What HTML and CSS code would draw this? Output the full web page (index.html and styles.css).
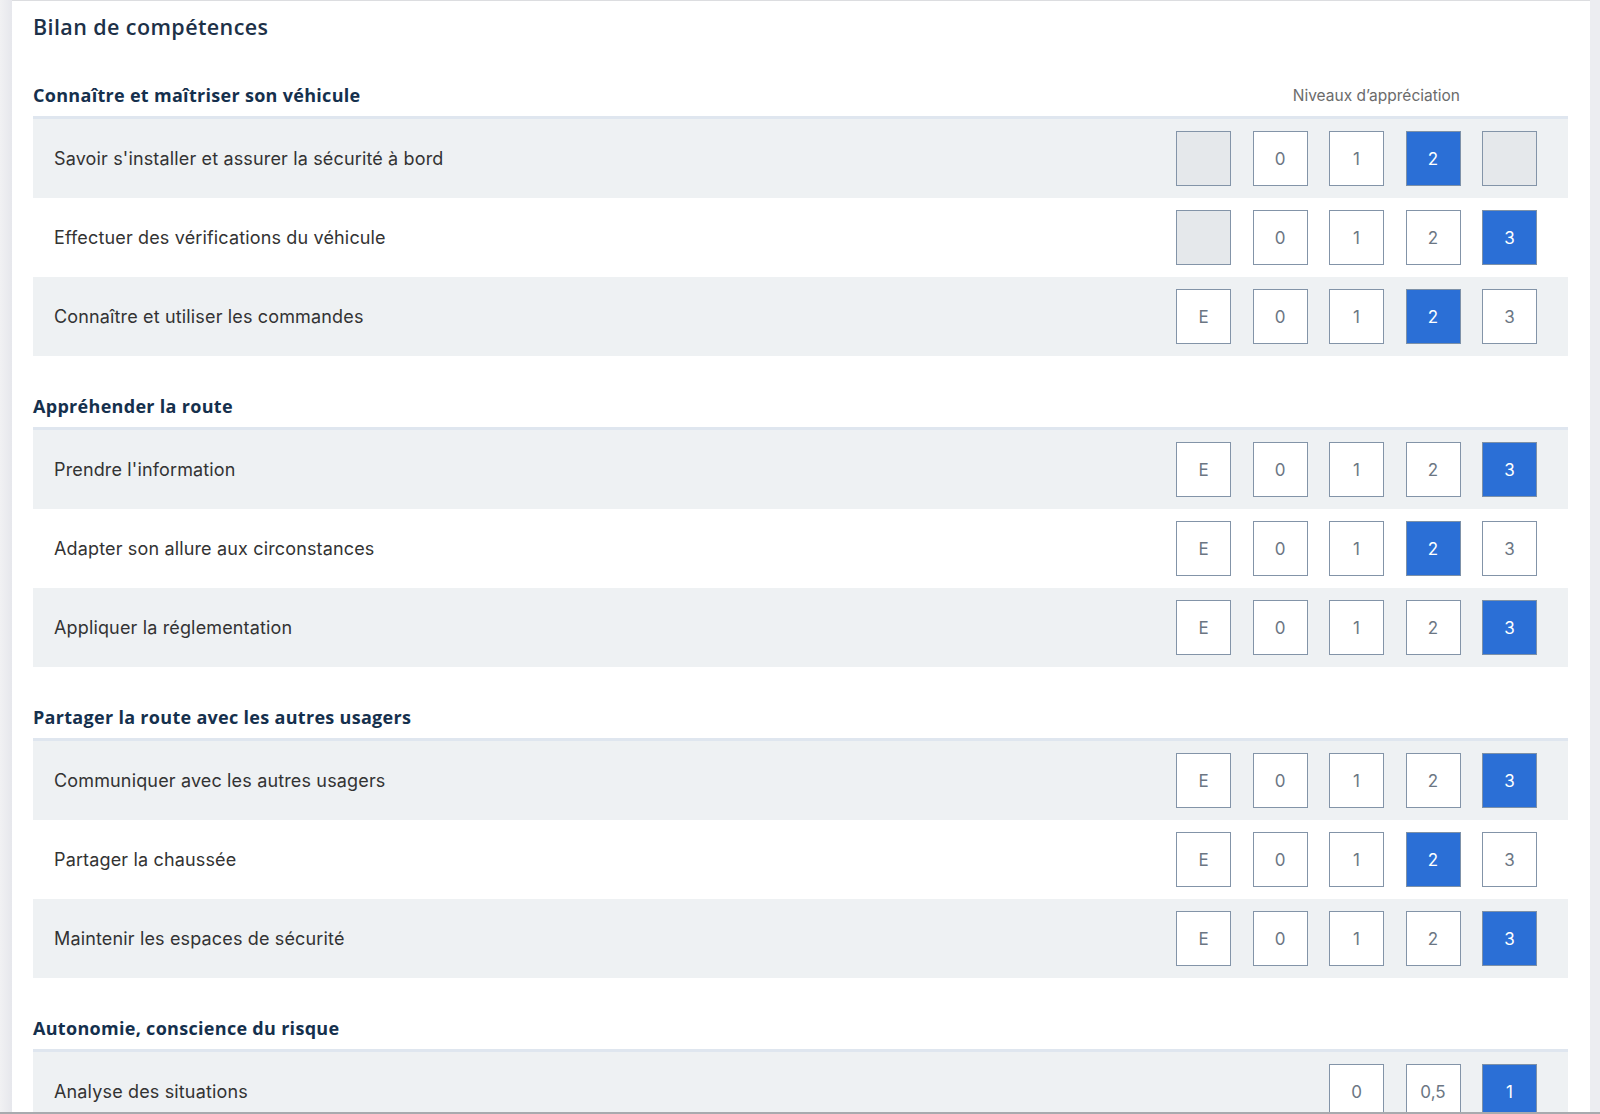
FILE: index.html
```html
<!DOCTYPE html>
<html lang="fr">
<head>
    <meta charset="UTF-8">
    <meta name="viewport" content="width=device-width, initial-scale=1.0">
    <title>Bilan de compétences</title>
    <link rel="stylesheet" href="styles.css">
</head>
<body>
    <div class="card">
        <h2 class="card-title">Bilan de compétences</h2>

        <section class="group">
            <div class="group-head">
                <h3>Connaître et maîtriser son véhicule</h3>
                <span class="levels-label">Niveaux d’appréciation</span>
            </div>
            <div class="skill">
                <span class="skill-name">Savoir s'installer et assurer la sécurité à bord</span>
                <div class="levels">
                    <span class="level off"></span>
                    <span class="level">0</span>
                    <span class="level">1</span>
                    <span class="level active">2</span>
                    <span class="level off"></span>
                </div>
            </div>
            <div class="skill">
                <span class="skill-name">Effectuer des vérifications du véhicule</span>
                <div class="levels">
                    <span class="level off"></span>
                    <span class="level">0</span>
                    <span class="level">1</span>
                    <span class="level">2</span>
                    <span class="level active">3</span>
                </div>
            </div>
            <div class="skill">
                <span class="skill-name">Connaître et utiliser les commandes</span>
                <div class="levels">
                    <span class="level">E</span>
                    <span class="level">0</span>
                    <span class="level">1</span>
                    <span class="level active">2</span>
                    <span class="level">3</span>
                </div>
            </div>
        </section>

        <section class="group">
            <div class="group-head">
                <h3>Appréhender la route</h3>
            </div>
            <div class="skill">
                <span class="skill-name">Prendre l'information</span>
                <div class="levels">
                    <span class="level">E</span>
                    <span class="level">0</span>
                    <span class="level">1</span>
                    <span class="level">2</span>
                    <span class="level active">3</span>
                </div>
            </div>
            <div class="skill">
                <span class="skill-name">Adapter son allure aux circonstances</span>
                <div class="levels">
                    <span class="level">E</span>
                    <span class="level">0</span>
                    <span class="level">1</span>
                    <span class="level active">2</span>
                    <span class="level">3</span>
                </div>
            </div>
            <div class="skill">
                <span class="skill-name">Appliquer la réglementation</span>
                <div class="levels">
                    <span class="level">E</span>
                    <span class="level">0</span>
                    <span class="level">1</span>
                    <span class="level">2</span>
                    <span class="level active">3</span>
                </div>
            </div>
        </section>

        <section class="group">
            <div class="group-head">
                <h3>Partager la route avec les autres usagers</h3>
            </div>
            <div class="skill">
                <span class="skill-name">Communiquer avec les autres usagers</span>
                <div class="levels">
                    <span class="level">E</span>
                    <span class="level">0</span>
                    <span class="level">1</span>
                    <span class="level">2</span>
                    <span class="level active">3</span>
                </div>
            </div>
            <div class="skill">
                <span class="skill-name">Partager la chaussée</span>
                <div class="levels">
                    <span class="level">E</span>
                    <span class="level">0</span>
                    <span class="level">1</span>
                    <span class="level active">2</span>
                    <span class="level">3</span>
                </div>
            </div>
            <div class="skill">
                <span class="skill-name">Maintenir les espaces de sécurité</span>
                <div class="levels">
                    <span class="level">E</span>
                    <span class="level">0</span>
                    <span class="level">1</span>
                    <span class="level">2</span>
                    <span class="level active">3</span>
                </div>
            </div>
        </section>

        <section class="group">
            <div class="group-head">
                <h3>Autonomie, conscience du risque</h3>
            </div>
            <div class="skill">
                <span class="skill-name">Analyse des situations</span>
                <div class="levels">
                    <span class="level">0</span>
                    <span class="level">0,5</span>
                    <span class="level active">1</span>
                </div>
            </div>
        </section>
    </div>
    <div class="bottom-edge"></div>
</body>
</html>
```

FILE: styles.css
```css
html, body {
    height: 100%;
}
body {
    margin: 0;
    overflow: hidden;
    background: linear-gradient(to right, #f1f1f3, #e6e7ec 12px, #ecedf1 12px);
    font-family: Inter, "Noto Sans", sans-serif;
    color: #333;
}
.card {
    margin: 0 10px 0 12px;
    padding: 12px 22px 0 21px;
    background: #fff;
    border-top: 1px solid #dcdde0;
}
.card-title {
    margin: 0;
    font-family: "Open Sans", sans-serif;
    font-size: 21.5px;
    font-weight: 600;
    line-height: 28px;
    letter-spacing: 0.4px;
    color: #1d3148;
}
.group {
    margin-top: 38px;
}
.group:first-of-type {
    margin-top: 42px;
}
.group-head {
    display: flex;
    align-items: center;
    justify-content: space-between;
    padding-bottom: 9px;
    border-bottom: 3px solid #dfe6ef;
}
.group-head h3 {
    margin: 0;
    font-family: "Open Sans", sans-serif;
    font-size: 18px;
    font-weight: 700;
    line-height: 24px;
    letter-spacing: 0.3px;
    color: #15304d;
}
.levels-label {
    padding-right: 108px;
    font-size: 15.5px;
    color: #6b6b6b;
}
.skill {
    display: flex;
    align-items: center;
    justify-content: space-between;
    height: 79px;
    padding: 0 31px 0 21px;
}
.skill:nth-child(even) {
    background: #eef1f3;
}
.skill-name {
    font-size: 18px;
    letter-spacing: 0.15px;
    color: #333;
}
.levels {
    display: flex;
    gap: 21.5px;
}
.level {
    box-sizing: border-box;
    width: 55px;
    height: 55px;
    display: flex;
    align-items: center;
    justify-content: center;
    border: 1px solid #8394a8;
    background: #fff;
    font-size: 17px;
    color: #6b7683;
}
.level.off {
    background: #e5e8eb;
}
.level.active {
    background: #2b6fd6;
    border-color: #7d91a8;
    color: #fff;
}
.bottom-edge {
    position: fixed;
    left: 0;
    right: 0;
    bottom: 0;
    height: 2px;
    background: #a8aaae;
}
```
